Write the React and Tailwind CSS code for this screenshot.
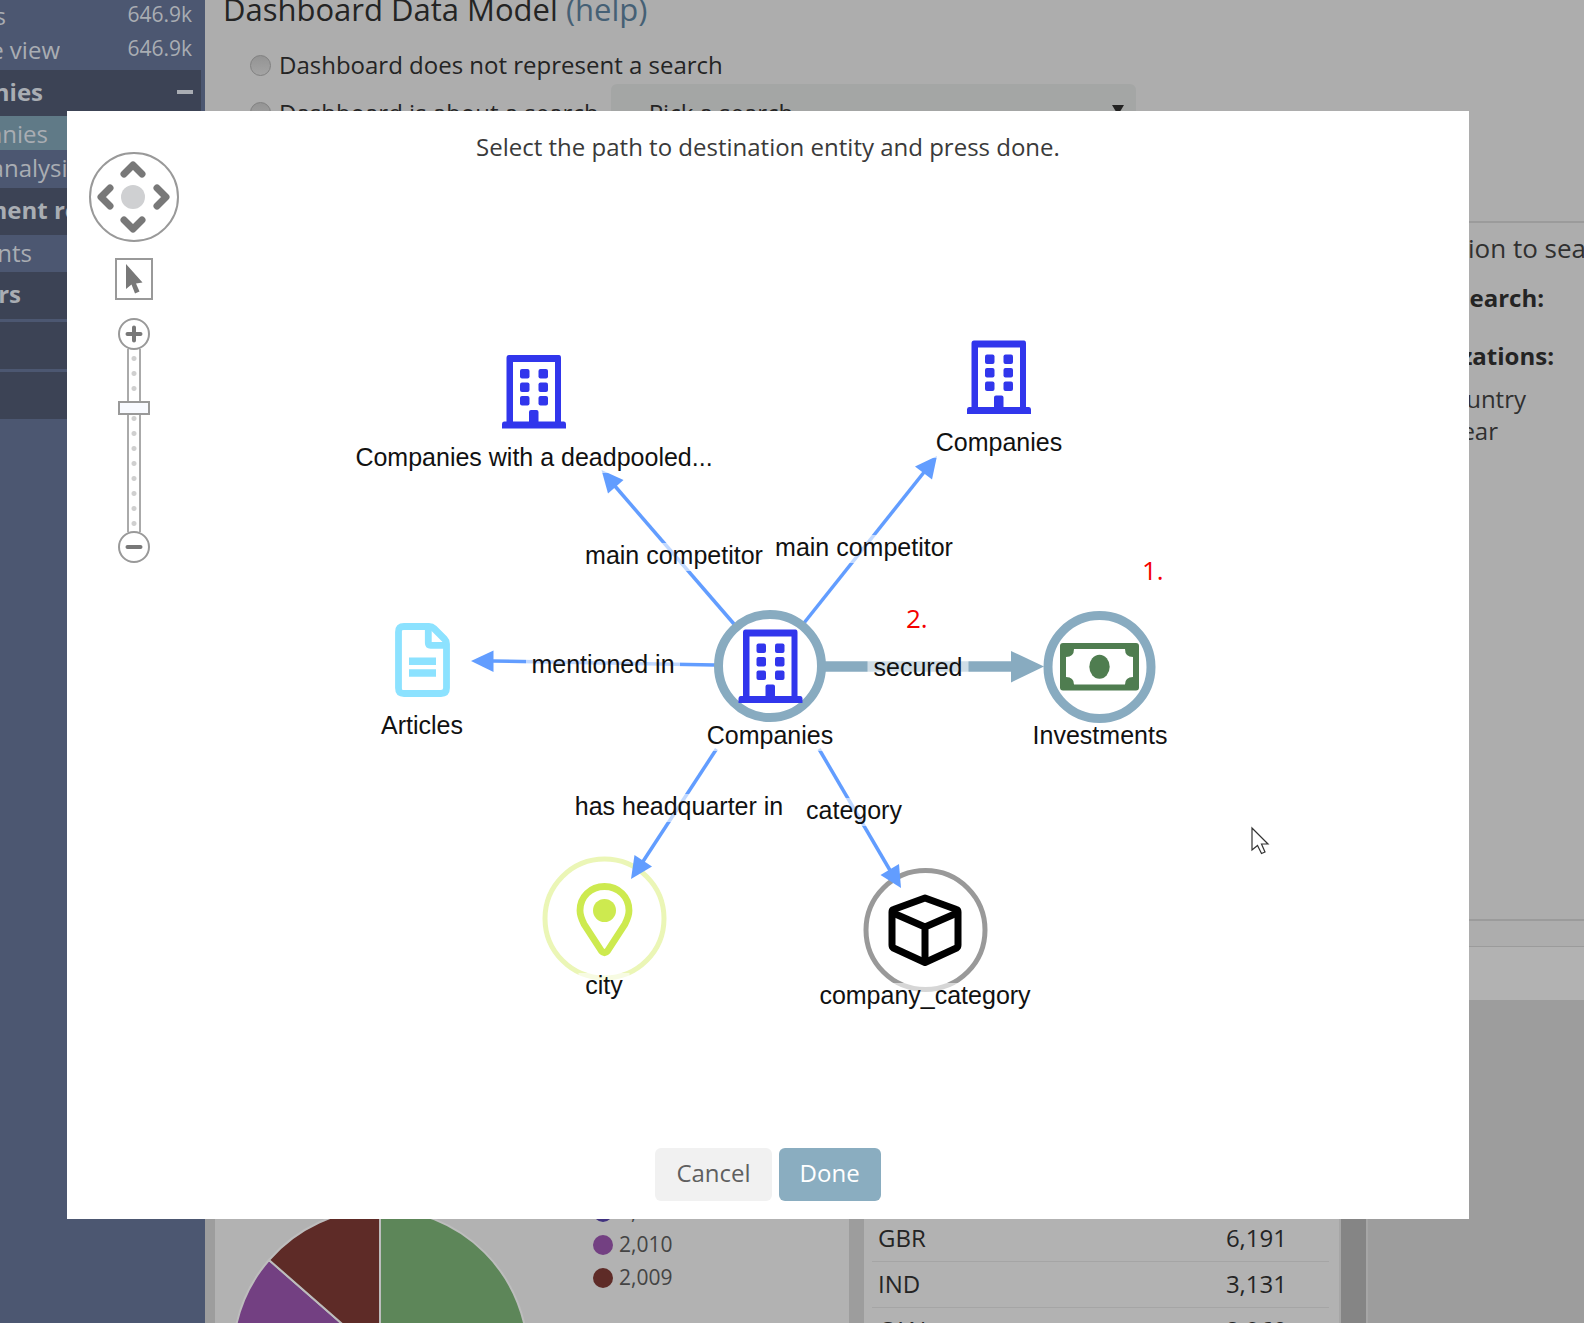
import React, { useState } from "react";

const sidebarItems = [
  { kind: "row", text: "s", count: "646.9k", cls: "h-[34px]", w: "w-[6px]" },
  { kind: "row", text: "e view", count: "646.9k", cls: "h-[38px]", w: "w-[60px]" },
  { kind: "head", text: "nies", cls: "h-[46px]", w: "w-[43px]", collapse: true },
  { kind: "row", text: "anies", cls: "h-[34px] bg-[#607a87]", w: "w-[48px]" },
  { kind: "row", text: "analysis", cls: "h-[38px]", w: "w-[79px]" },
  { kind: "head", text: "ment re", cls: "h-[47px]", w: "w-[79px]" },
  { kind: "row", text: "nts", cls: "h-[37px]", w: "w-[32px]" },
  { kind: "head", text: "rs", cls: "h-[47px]", w: "w-[21px]" },
];

function Sidebar() {
  return (
    <nav className="-mt-[2px] w-[205px] shrink-0 overflow-hidden bg-[#4c5771] text-2xl text-[#a9adb3]">
      {sidebarItems.map((item, i) =>
        item.kind === "head" ? (
          <div key={i} className={"mr-1 flex items-start justify-between bg-[#3c4355] pr-2 font-bold " + item.cls}>
            <span className={"flex shrink-0 justify-end overflow-hidden leading-[43px] whitespace-nowrap " + item.w}>
              {item.text}
            </span>
            {item.collapse && (
              <button aria-label="Collapse" className="flex h-11 w-4 items-center justify-center">
                <span className="h-1 w-4 bg-[#a9adb3]" />
              </button>
            )}
          </div>
        ) : (
          <a key={i} href="#" className={"flex items-start justify-between pr-[13px] " + item.cls}>
            <span className={"flex shrink-0 justify-end overflow-hidden leading-[36px] whitespace-nowrap " + item.w}>
              {item.text}
            </span>
            {item.count && <span className="text-[21px] leading-[33px]">{item.count}</span>}
          </a>
        )
      )}
      <div className="mt-[3px] mr-1 h-[47px] bg-[#3c4355]" />
      <div className="mt-[3px] mr-1 h-[47px] bg-[#3c4355]" />
    </nav>
  );
}

const radioClass =
  "size-[21px] shrink-0 appearance-none rounded-full border border-[#808080] bg-linear-to-b from-[#949494] to-[#a4a4a4]";

function Page() {
  return (
    <div className="flex h-full">
      <Sidebar />
      <main className="flex min-w-0 flex-1 flex-col bg-[#adadad] text-[#242424]">
        <section className="h-[221px] shrink-0 pl-[18px]">
          <h1 className="-mt-[11px] text-[31px] leading-10">
            Dashboard Data Model{" "}
            <a href="#" className="text-[#456075]">
              (help)
            </a>
          </h1>
          <div className="mt-3 flex h-[48px] items-center gap-2 pl-[27px] text-2xl">
            <input id="no-search" type="radio" name="model" className={radioClass} />
            <label htmlFor="no-search">Dashboard does not represent a search</label>
          </div>
          <div className="-mt-[5px] flex h-[57px] items-center gap-2 pl-[27px] text-2xl">
            <input id="is-search" type="radio" name="model" className={radioClass} />
            <label htmlFor="is-search">Dashboard is about a search</label>
            <div className="relative ml-1 w-[525px]">
              <select
                aria-label="Search"
                className="h-[57px] w-full appearance-none rounded-md bg-[#a4a6a5] pl-[38px] text-2xl"
              >
                <option>Pick a search</option>
              </select>
              <svg className="pointer-events-none absolute top-[21px] right-3" width="12" height="10" viewBox="0 0 12 10">
                <path d="M0 0H12L6 10Z" fill="#222" />
              </svg>
            </div>
          </div>
        </section>
        <section className="flex h-[700px] shrink-0 justify-end border-y-2 border-[#9b9b9b]">
          <div className="w-[120px] overflow-hidden whitespace-nowrap">
            <p className="pt-2 pl-1 text-[26px] leading-[34px] text-[#303030]">ion to search</p>
            <p className="mt-4 w-20 text-right text-2xl leading-[34px] font-bold">earch:</p>
            <p className="mt-6 flex w-[90px] justify-end text-2xl leading-[34px] font-bold">zations:</p>
            <ul className="mt-[10px] text-2xl leading-8 text-[#303030]">
              <li className="flex w-[62px] justify-end">untry</li>
              <li className="flex w-[34px] justify-end">ear</li>
            </ul>
          </div>
        </section>
        <div className="h-[26px] shrink-0 border-b border-[#9b9b9b]" />
        <div className="h-[53px] shrink-0 bg-[#b2b2b2]" />
        <section className="flex min-h-0 flex-1 gap-[15px] bg-[#9d9d9d] pt-3 pl-[10px]">
          <div className="flex w-[634px] shrink-0 gap-[65px] overflow-hidden bg-[#b2b2b2] pl-[17px]">
            <svg className="mt-[197px] shrink-0" width="296" height="296" viewBox="0 0 296 296">
              <g stroke="#bdbdbd" strokeWidth="2">
                <path d="M148 148V0A148 148 0 0 1 148 296Z" fill="#5d8659" />
                <path d="M148 148V296A148 148 0 0 1 37 51Z" fill="#734082" />
                <path d="M148 148L37 51A148 148 0 0 1 148 0Z" fill="#5e2b27" />
              </g>
            </svg>
            <ul className="mt-[183px] text-[21px] text-[#444]">
              {[
                ["2,013", "bg-[#40327f]"],
                ["2,010", "bg-[#734082]"],
                ["2,009", "bg-[#5e2b27]"],
              ].map(([label, color]) => (
                <li key={label} className="flex h-[33px] items-center gap-[6px]">
                  <span className={"size-5 rounded-full " + color} />
                  {label}
                </li>
              ))}
            </ul>
          </div>
          <div className="flex w-[504px] shrink-0 overflow-hidden bg-[#b2b2b2]">
            <div className="flex-1 pt-[203px] pr-[10px] pl-2">
              <table className="w-full text-2xl">
                <tbody>
                  {[
                    ["GBR", "6,191"],
                    ["IND", "3,131"],
                    ["CAN", "2,960"],
                  ].map(([k, v]) => (
                    <tr key={k} className="h-[46px] border-b border-[#a5a5a5]">
                      <td className="pl-[6px]">{k}</td>
                      <td className="pr-[42px] text-right">{v}</td>
                    </tr>
                  ))}
                </tbody>
              </table>
            </div>
            <div className="w-[29px] border-x-2 border-[#a6a6a6] bg-[#858585]" />
          </div>
        </section>
      </main>
    </div>
  );
}

function Chevron({ d, label, cls }) {
  return (
    <button aria-label={label} className={"flex items-center justify-center " + cls}>
      <svg className="shrink-0" width="26" height="26" viewBox="0 0 26 26" fill="none" stroke="#787878" strokeWidth="7" strokeLinecap="round" strokeLinejoin="round">
        <path d={d} />
      </svg>
    </button>
  );
}

function NavControls() {
  const [zoom, setZoom] = useState(69);
  const round =
    "flex size-8 shrink-0 items-center justify-center rounded-full border-2 border-[#999] bg-white text-[#787878]";
  return (
    <div className="absolute top-0 left-[21px] flex w-[91px] flex-col items-center">
      <div className="grid size-[90px] grid-cols-3 grid-rows-3 items-center justify-items-center rounded-full border-2 border-[#999] p-[5px]">
        <Chevron label="Pan up" cls="col-start-2 row-start-1 size-6" d="M4 15L13 6L22 15" />
        <Chevron label="Pan left" cls="col-start-1 row-start-2 size-6" d="M15 4L6 13L15 22" />
        <button aria-label="Fit view" className="col-start-2 row-start-2 size-6 rounded-full bg-[#cfd0d2]" />
        <Chevron label="Pan right" cls="col-start-3 row-start-2 size-6" d="M11 4L20 13L11 22" />
        <Chevron label="Pan down" cls="col-start-2 row-start-3 size-6" d="M4 11L13 20L22 11" />
      </div>
      <button aria-label="Select" className="mt-4 flex h-[42px] w-[38px] items-center justify-center border-2 border-[#999]">
        <svg width="18" height="30" viewBox="0 0 18 30">
          <path d="M1 0V25L6.5 20.5L10 29.5L14.5 27.5L11 19.5L17.5 18.5Z" fill="#787878" />
        </svg>
      </button>
      <button aria-label="Zoom in" className={"mt-[18px] " + round}>
        <svg width="18" height="18" viewBox="0 0 18 18" stroke="#787878" strokeWidth="4" strokeLinecap="round">
          <path d="M9 2.5V15.5M2.5 9H15.5" />
        </svg>
      </button>
      <div className="relative -my-px flex h-[183px] w-[14px] justify-center border-x-2 border-[#aaa] bg-[radial-gradient(circle_at_center,#d0d0d0_2px,transparent_3px)] bg-[length:10px_15px] bg-[position:0_2px]">
        <input
          type="range"
          aria-label="Zoom"
          value={zoom}
          onChange={(e) => setZoom(Number(e.target.value))}
          className="h-[183px] w-8 shrink-0 appearance-none bg-transparent [direction:rtl] [writing-mode:vertical-lr] [&::-webkit-slider-thumb]:h-[14px] [&::-webkit-slider-thumb]:w-8 [&::-webkit-slider-thumb]:appearance-none [&::-webkit-slider-thumb]:border-2 [&::-webkit-slider-thumb]:border-[#999] [&::-webkit-slider-thumb]:bg-[#f8faff]"
        />
      </div>
      <button aria-label="Zoom out" className={round}>
        <svg width="18" height="18" viewBox="0 0 18 18" stroke="#787878" strokeWidth="4" strokeLinecap="round">
          <path d="M2.5 9H15.5" />
        </svg>
      </button>
    </div>
  );
}

function Building({ x, y }) {
  return (
    <g transform={`translate(${x} ${y})`} fill="#3136ec">
      <path fillRule="evenodd" d="M7 0H57Q59 0 59 3V66.5H62Q64 66.5 64 69V73.5H0V69Q0 66.5 2 66.5H4.500V3Q4.500 0 7 0ZM11 7V66.500H27V57Q27 55 29 55H34.500Q36.500 55 36.500 57V66.500H53V7Z" />
      {[14, 27.5, 41].map((wy) => (
        <g key={wy}>
          <rect x="18" y={wy} width="9.500" height="9.500" rx="2" />
          <rect x="36.500" y={wy} width="9.500" height="9.500" rx="2" />
        </g>
      ))}
    </g>
  );
}

const edges = [
  { line: "M734 624L614 485", head: "601.5,470 623.5,480 608,493.500" },
  { line: "M804 623L925 471", head: "937,456 915,466.500 932,479.500" },
  { line: "M715 665L492 661", head: "471,661 493.500,650.500 493.500,672" },
  { line: "M716.500 749L642 863", head: "631,879 634.500,855 652,866.500" },
  { line: "M819 749L891 872", head: "901,888 899,864 880.500,875" },
];

const labels = [
  { text: "main competitor", x: 674, y: 564, w: 190 },
  { text: "main competitor", x: 864, y: 556, w: 190 },
  { text: "mentioned in", x: 603, y: 673, w: 154 },
  { text: "secured", x: 918, y: 676, w: 101 },
  { text: "has headquarter in", x: 679, y: 815, w: 218 },
  { text: "category", x: 854, y: 819, w: 108 },
  { text: "Companies with a deadpooled...", x: 534, y: 466, w: 364 },
  { text: "Companies", x: 999, y: 451, w: 138 },
  { text: "Articles", x: 422, y: 734, w: 92 },
  { text: "Companies", x: 770, y: 744, w: 138 },
  { text: "Investments", x: 1100, y: 744, w: 144 },
  { text: "city", x: 604, y: 994, w: 51 },
  { text: "company_category", x: 925, y: 1004, w: 218 },
];

function Graph() {
  return (
    <svg className="mx-auto block" width="1402" height="960" viewBox="67 152 1402 960" role="img" aria-label="Entity graph">
      <circle cx="604.500" cy="918.500" r="59.500" fill="none" stroke="#ebf6b6" strokeWidth="5" />
      <circle cx="925.500" cy="930" r="59.500" fill="none" stroke="#999" strokeWidth="5" />
      {edges.map((e) => (
        <g key={e.line}>
          <path d={e.line} stroke="#629dff" strokeWidth="3.500" />
          <polygon points={e.head} fill="#629dff" />
        </g>
      ))}
      <path d="M822 666.500H1012" stroke="#88abc0" strokeWidth="10.500" />
      <polygon points="1011,651 1044,666.500 1011,682.500" fill="#88abc0" />
      <circle cx="770" cy="666" r="51.500" fill="#fff" stroke="#88abc0" strokeWidth="9" />
      <circle cx="1099.500" cy="667" r="51.500" fill="#fff" stroke="#88abc0" strokeWidth="9" />
      <Building x={502} y={355} />
      <Building x={967} y={340.5} />
      <Building x={738.5} y={629.5} />
      <g transform="translate(395 623)" fill="none" stroke="#8ce2ff" strokeWidth="6.800">
        <path d="M9 3.500H34Q37 3.500 39 5.500L49.500 16Q51.500 18 51.500 21V65Q51.500 70.500 46 70.500H9Q3.500 70.500 3.500 65V9Q3.500 3.500 9 3.500Z" />
        <path d="M33.300 3.500V20Q33.300 22.300 35.500 22.300H51.500" />
        <path d="M14 38.200H41M14 50H41" strokeWidth="7.600" />
      </g>
      <g transform="translate(1060 643)" fill="#4f7d50">
        <path fillRule="evenodd" d="M3 0H76Q79 0 79 3V44.500Q79 47.500 76 47.500H3Q0 47.500 0 44.500V3Q0 0 3 0ZM14 6Q14 14 6 14V34Q14 34 14 41.500H65Q65 34 73 34V14Q65 14 65 6Z" />
        <ellipse cx="39.500" cy="23.800" rx="10.200" ry="12" />
      </g>
      <path d="M604.500 886.500C590.500 886.500 580 897 580 910.500C580 916 582 920 584 924L601.500 951Q604.500 954.500 607.500 951L625 924C627 920 629 916 629 910.500C629 897 618.500 886.500 604.500 886.500Z" fill="none" stroke="#cdea4f" strokeWidth="6.800" />
      <circle cx="604.500" cy="910.500" r="11.500" fill="#cdea4f" />
      <g fill="none" stroke="#000" strokeWidth="7" strokeLinejoin="round">
        <path d="M925 898L956.500 909.500Q958 910 958 912V945Q958 947 956.500 948L925 962.500L893.500 948Q892 947 892 945V912Q892 910 893.500 909.500Z" />
        <path d="M893 913L925 927L957 913M925 927V962" />
      </g>
      <g fontFamily="'Liberation Sans', Arial, sans-serif" fontSize="25" textAnchor="middle" fill="#111">
        {labels.map((l, i) => (
          <g key={i}>
            <rect x={l.x - l.w / 2} y={l.y - 21} width={l.w} height="28" fill="#fff" fillOpacity="0.6" />
            <text x={l.x} y={l.y}>
              {l.text}
            </text>
          </g>
        ))}
      </g>
      <g fontFamily="'Open Sans', sans-serif" fontSize="26" fontWeight="500" fill="#f40000">
        <text x="1142" y="580">1.</text>
        <text x="906" y="628">2.</text>
      </g>
      <path d="M1252 828V850L1257.500 845.500L1261.500 853.500L1265 852L1261.500 844H1268Z" fill="#fff" stroke="#333" strokeWidth="1.200" />
    </svg>
  );
}

function PathDialog() {
  return (
    <div className="absolute inset-0 pt-[111px] pr-[115px] pl-[67px]">
      <div role="dialog" aria-labelledby="dialog-title" className="overflow-hidden bg-white pt-[19px] pb-[18px]">
        <h2 id="dialog-title" className="text-center text-2xl leading-[34px] text-[#3a3a3a]">
          Select the path to destination entity and press done.
        </h2>
        <div className="relative -mt-3">
          <NavControls />
          <Graph />
        </div>
        <div className="mt-9 flex justify-center gap-[7px] text-2xl">
          <button className="h-[53px] rounded-md bg-[#f1f1f1] px-[21px] pb-1 text-[#5f5f5f]">Cancel</button>
          <button className="h-[53px] rounded-md bg-[#8aadc0] px-[21px] pb-1 text-white">Done</button>
        </div>
      </div>
    </div>
  );
}

export default function App() {
  return (
    <div className="relative h-screen overflow-hidden font-['Open_Sans',sans-serif]">
      <Page />
      <PathDialog />
    </div>
  );
}
